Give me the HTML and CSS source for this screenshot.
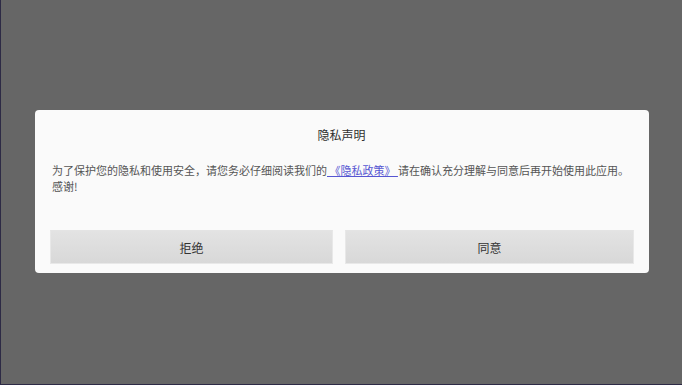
FILE: index.html
```html
<!DOCTYPE html>
<html lang="zh">
<head>
<meta charset="utf-8">
<link rel="stylesheet" href="styles.css">
</head>
<body>
<div class="screen">
  <div class="dialog">
    <div class="title">隐私声明</div>
    <p class="message">为了保护您的隐私和使用安全，请您务必仔细阅读我们的<a class="link" href="#"> 《隐私政策》 </a>请在确认充分理解与同意后再开始使用此应用。感谢!</p>
    <div class="actions">
      <button class="btn btn-left">拒绝</button>
      <button class="btn btn-right">同意</button>
    </div>
  </div>
</div>
</body>
</html>
```
FILE: styles.css
```css
html, body {
  margin: 0;
  padding: 0;
}
body {
  width: 682px;
  height: 385px;
  background: #666666;
  font-family: "Noto Sans CJK SC", "Noto Sans", sans-serif;
  overflow: hidden;
}
.screen {
  box-sizing: border-box;
  width: 682px;
  height: 385px;
  border-left: 1px solid #2d2a45;
  border-bottom: 1px solid #2d2a45;
  padding-top: 110px;
  padding-left: 34px;
}
.dialog {
  box-sizing: border-box;
  width: 614px;
  height: 163px;
  background: #fafafa;
  border-radius: 4px;
  padding: 16px 12px 9px 15px;
  display: flex;
  flex-direction: column;
}
.title {
  text-align: center;
  font-size: 12px;
  line-height: 18px;
  color: #2e2e2e;
  margin-right: 4px;
}
.message {
  margin: 18px 0 0 2px;
  padding: 0;
  font-size: 11px;
  line-height: 16px;
  color: #555555;
  height: 32px;
}
.link {
  color: #5656d2;
  text-decoration: underline;
}
.actions {
  margin-top: 36px;
  display: flex;
  gap: 12px;
}
.btn {
  height: 34px;
  box-sizing: border-box;
  border: 1px solid #e8e8e8;
  border-top-color: #e4e4e4;
  background: linear-gradient(#e3e3e3, #d8d8d8);
  font-family: inherit;
  font-size: 12px;
  color: #333333;
  padding: 0;
  margin: 0;
}
.btn-left { width: 283px; }
.btn-right { width: 289px; }
```
